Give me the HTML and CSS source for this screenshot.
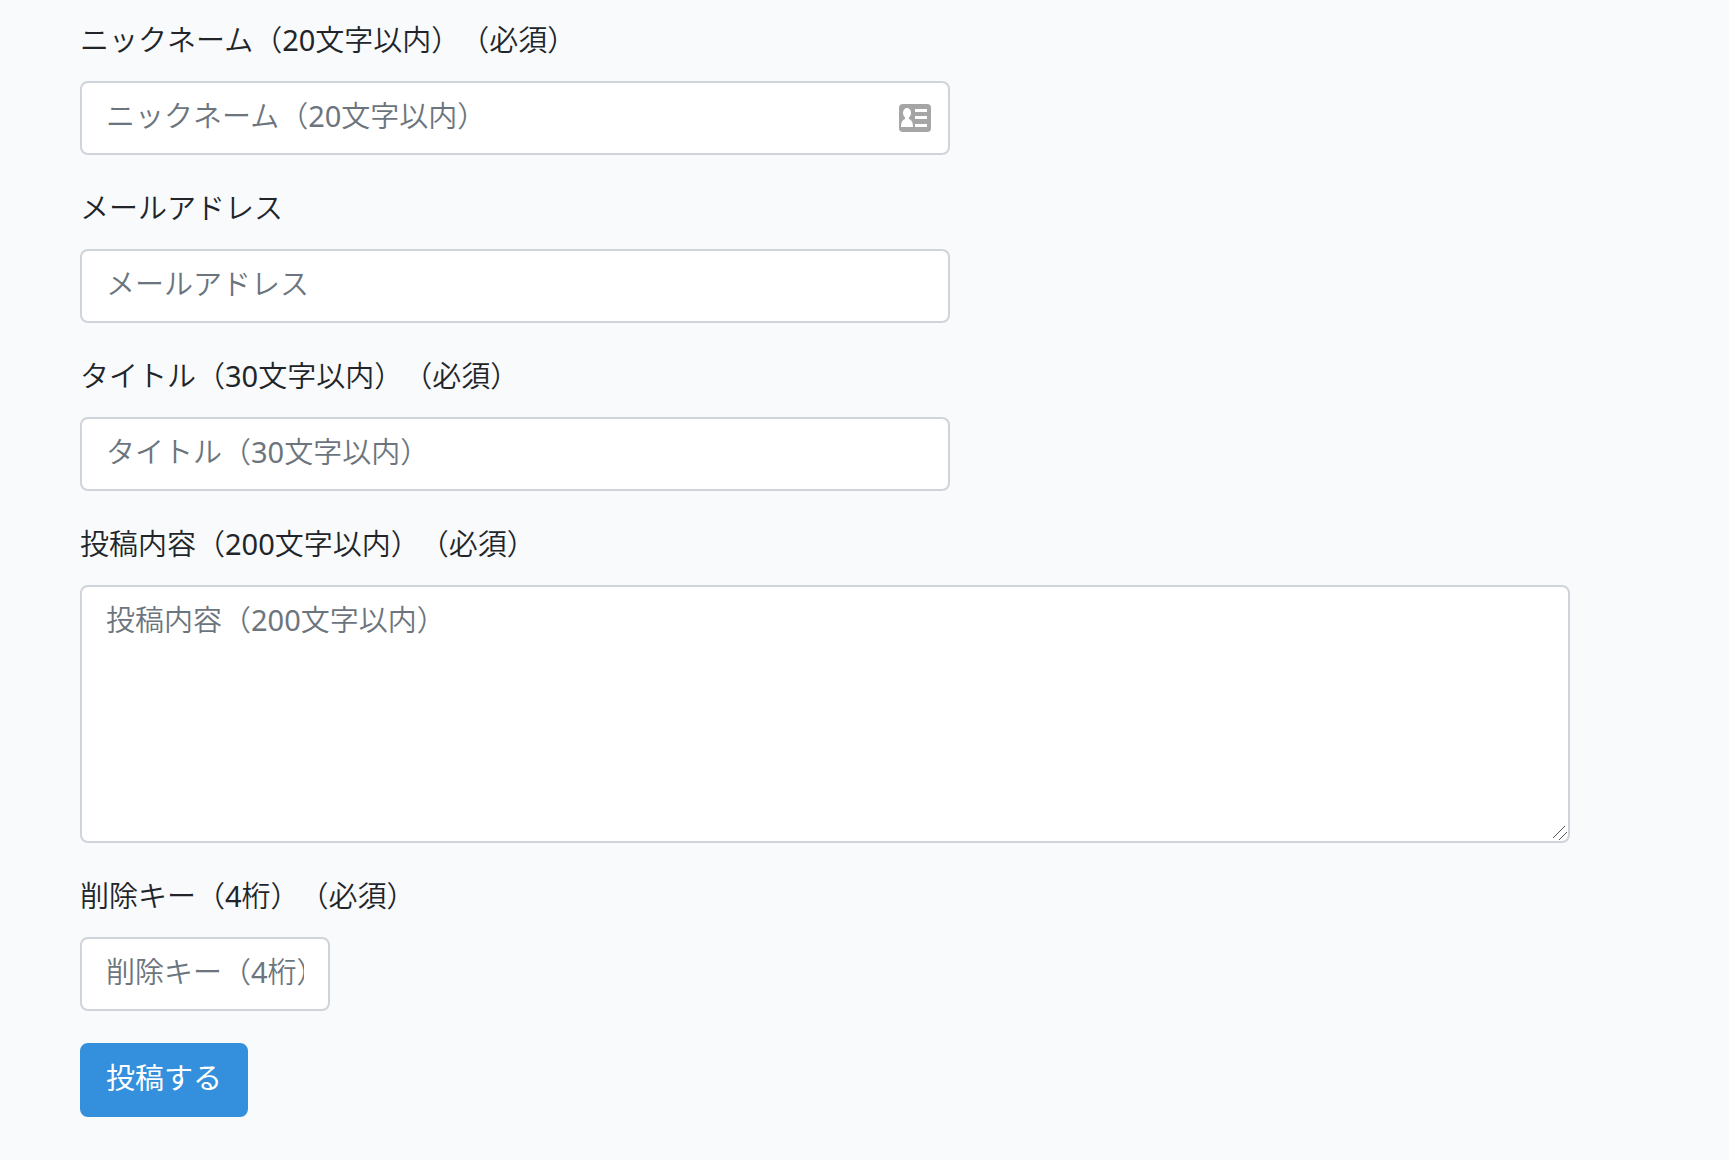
FILE: index.html
```html
<!DOCTYPE html>
<html lang="ja">
<head>
<meta charset="utf-8">
<meta name="viewport" content="width=device-width, initial-scale=1">
<title>投稿フォーム</title>
<link rel="stylesheet" href="styles.css">
</head>
<body>
<form class="post-form">
  <div class="field">
    <label class="label" for="nickname">ニックネーム（20文字以内）（必須）</label>
    <div class="control">
      <input class="input" id="nickname" type="text" maxlength="20" placeholder="ニックネーム（20文字以内）">
      <svg class="card-icon" viewBox="0 0 32 28" aria-hidden="true">
        <rect width="32" height="28" rx="4" fill="#a5a5a5"/>
        <g fill="#fff">
          <ellipse cx="8" cy="9" rx="4" ry="5"/>
          <path d="M6 12h4v3c2 1 4 2 4 8H2c0-6 2-7 4-8z"/>
          <path d="M16 5h12v3H16zM16 12h12v3H16zM16 20h12v3H16z"/>
        </g>
      </svg>
    </div>
  </div>
  <div class="field">
    <label class="label" for="email">メールアドレス</label>
    <div class="control">
      <input class="input" id="email" type="email" placeholder="メールアドレス">
    </div>
  </div>
  <div class="field">
    <label class="label" for="title">タイトル（30文字以内）（必須）</label>
    <div class="control">
      <input class="input" id="title" type="text" maxlength="30" placeholder="タイトル（30文字以内）">
    </div>
  </div>
  <div class="field">
    <label class="label" for="content">投稿内容（200文字以内）（必須）</label>
    <textarea class="input" id="content" rows="5" maxlength="200" placeholder="投稿内容（200文字以内）"></textarea>
  </div>
  <div class="field">
    <label class="label" for="delete-key">削除キー（4桁）（必須）</label>
    <div class="control control-short">
      <input class="input" id="delete-key" type="text" maxlength="4" placeholder="削除キー（4桁）">
    </div>
  </div>
  <button class="submit" type="submit">投稿する</button>
</form>
</body>
</html>
```
FILE: styles.css
```css
*,
*::before,
*::after {
  box-sizing: border-box;
}

body {
  margin: 0;
  background: #f8fafc;
  color: #212529;
  font-family: "Noto Sans", "Noto Sans CJK JP DemiLight", "Noto Sans CJK JP", sans-serif;
  font-size: 29px;
  font-weight: 400;
  line-height: 46px;
  text-spacing-trim: space-all;
}

.post-form {
  display: flex;
  flex-direction: column;
  align-items: flex-start;
  gap: 32px;
  padding: 19px 159px 32px 80px;
}

.field {
  display: flex;
  flex-direction: column;
  gap: 20px;
  width: 100%;
}

.label {
  line-height: 42px;
}

.control {
  position: relative;
  width: 100%;
  max-width: 870px;
}

.control-short {
  max-width: 250px;
}

.input {
  display: block;
  width: 100%;
  padding: 10px 24px 14px;
  border: 2px solid #ced4da;
  border-radius: 8px;
  background: #fff;
  color: #495057;
  font: inherit;
  text-spacing-trim: inherit;
}

textarea.input {
  resize: vertical;
}

textarea.input::-webkit-scrollbar {
  width: 20px;
}

textarea.input::-webkit-resizer {
  background: url("data:image/svg+xml,%3Csvg xmlns='http://www.w3.org/2000/svg' width='18' height='18'%3E%3Cpath d='M1 17L17 1M9 17L17 9' stroke='%23555' stroke-width='1'/%3E%3C/svg%3E") right bottom no-repeat;
}

.input::placeholder {
  color: #6c757d;
  opacity: 1;
}

.card-icon {
  position: absolute;
  top: 23px;
  right: 19px;
  width: 32px;
  height: 28px;
}

.submit {
  padding: 10px 24px 14px;
  border: 2px solid #3490dc;
  border-radius: 8px;
  background: #3490dc;
  color: #fff;
  font: inherit;
  font-family: "Noto Sans", "Noto Sans CJK JP", sans-serif;
}
```
